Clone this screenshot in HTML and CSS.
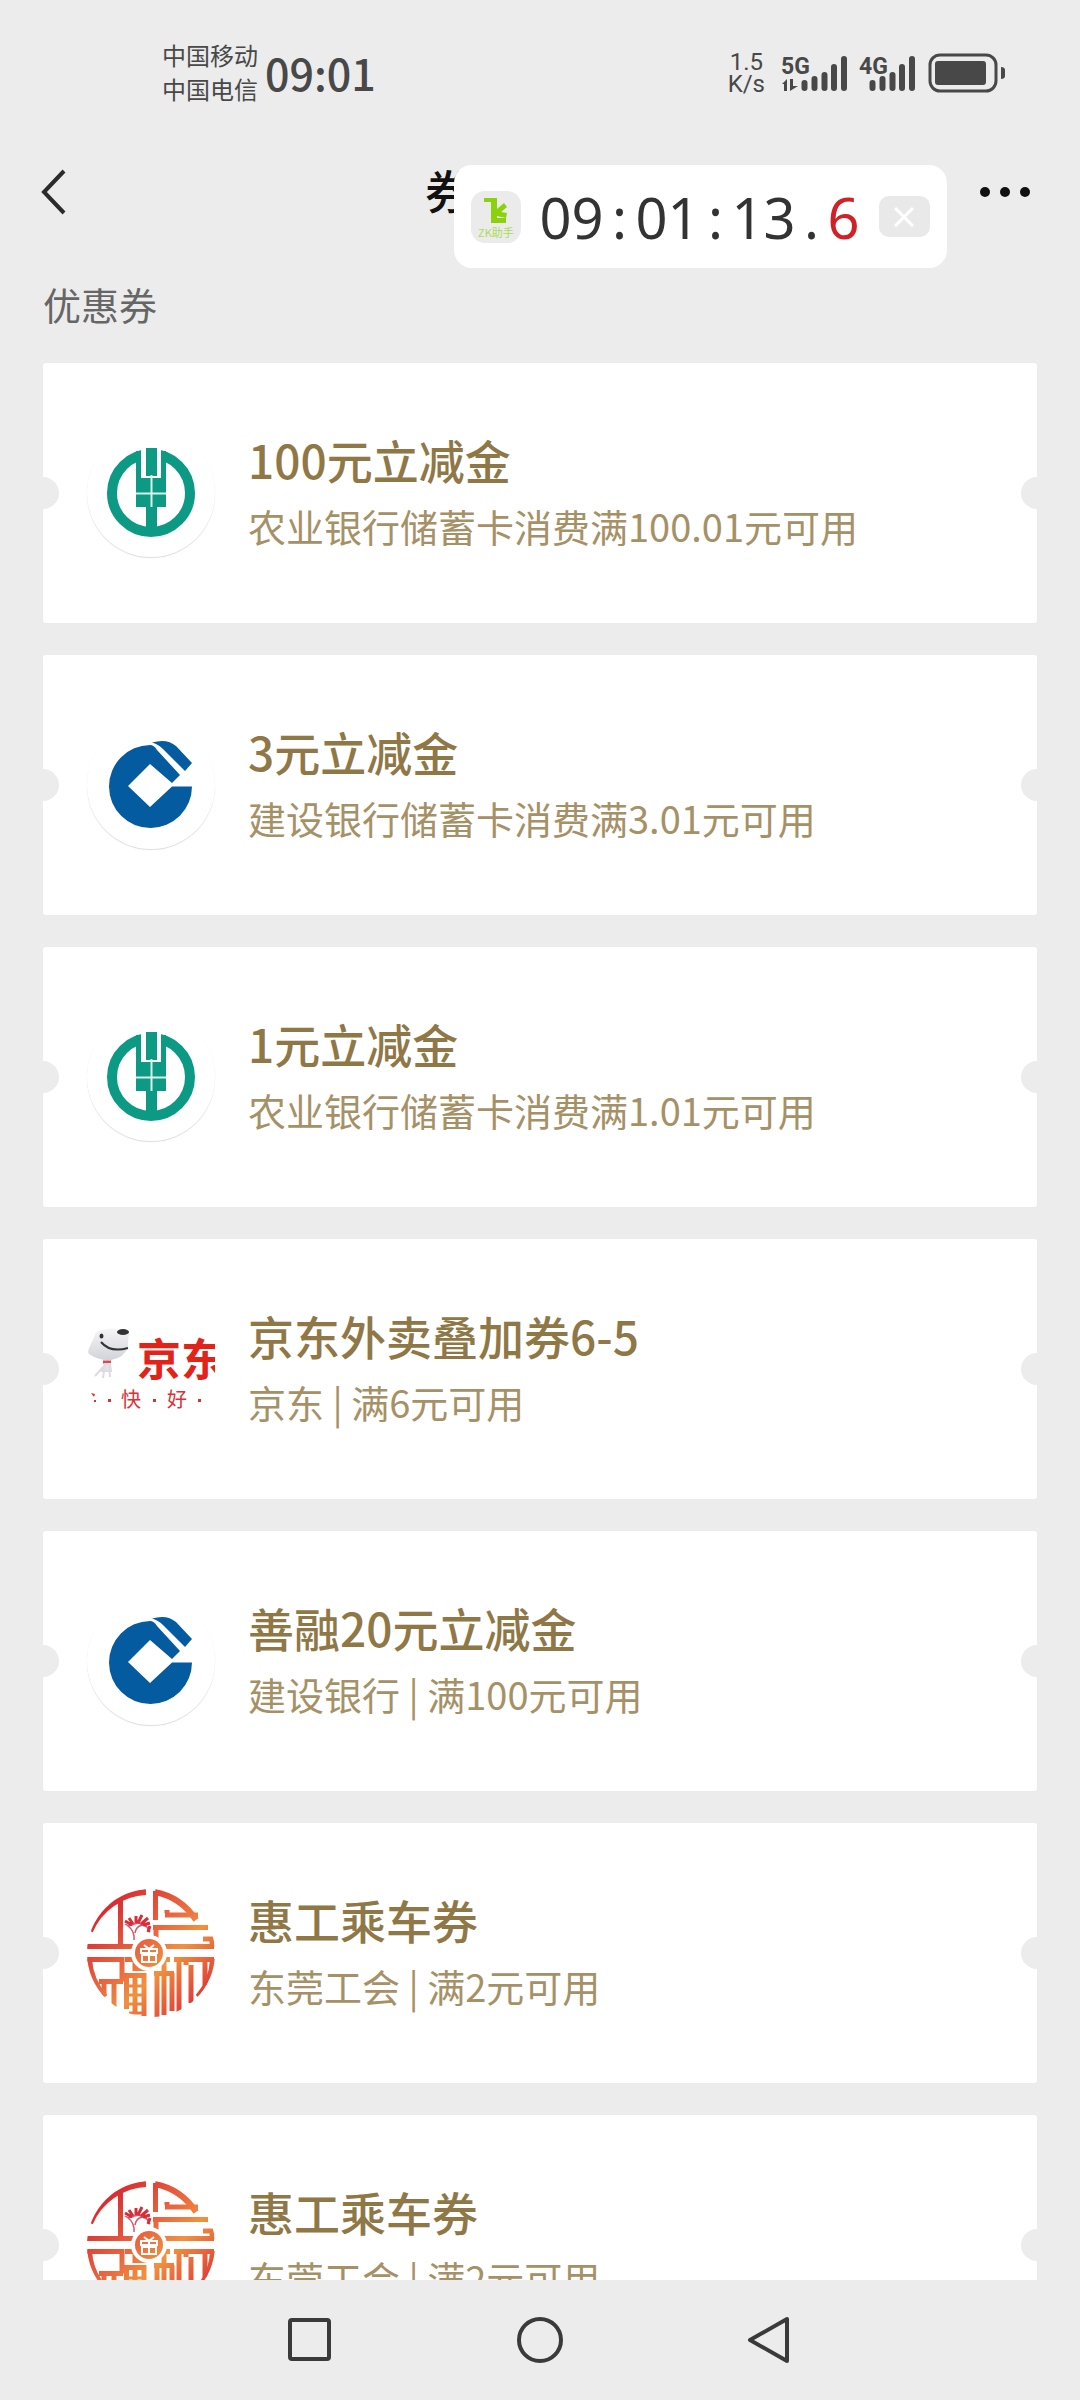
FILE: index.html
```html
<!DOCTYPE html>
<html lang="zh-CN">
  <head>
    <meta charset="UTF-8" />
    <meta name="viewport" content="width=device-width, initial-scale=1.0" />
    <title>优惠券</title>
    <link rel="stylesheet" href="styles.css">
  </head>
  <body>
    <!-- logos used by the coupons -->
    <svg class="sprite" aria-hidden="true">
      <defs>
        <linearGradient id="warm" x1="0" y1="0" x2="128" y2="128" gradientUnits="userSpaceOnUse">
          <stop offset="0.1" stop-color="#d8202f" />
          <stop offset="0.45" stop-color="#ea6a40" />
          <stop offset="0.6" stop-color="#f0923f" />
          <stop offset="0.9" stop-color="#dc3038" />
        </linearGradient>
        <linearGradient id="dog" x1="0" y1="0" x2="0" y2="1">
          <stop offset="0" stop-color="#f6f6f8" />
          <stop offset="1" stop-color="#d2d3d9" />
        </linearGradient>
        <clipPath id="round"><circle cx="64" cy="64" r="64" /></clipPath>
      </defs>
      <symbol id="abc" viewBox="0 0 128 128">
        <circle cx="64" cy="64" r="39" fill="none" stroke="#0d9a85" stroke-width="10" />
        <path fill="#fff" d="M54 17h20v32H54z" />
        <path fill="#0d9a85" d="M59 19h11v28H59zM49 22h5v27h20V22h5v56h-9v28H59V78H49z" />
        <path stroke="#d9f0ec" stroke-width="2" d="M49 64.500h30M64.500 46v32" />
      </symbol>
      <symbol id="ccb" viewBox="0 0 128 128">
        <path fill="#045b9f" d="M63 24Q67 24 70 29L93 54l-8 8L63 43 41 65l22 21 22-20.500h20A41.500 41.500 0 1 1 63 24z" />
        <path fill="#045b9f" d="M65 21.500Q80 17 89 25l16 17-7 8-22-22q-5-5-11-6.500z" />
      </symbol>
      <symbol id="jd" viewBox="0 0 128 128">
        <path fill="url(#dog)" d="M9 27Q20 22 34 24q8 0 8 5-1 4-1 13-4 11-17 13-12 1-22-6-2-2 1-8 4-8 6-14z" />
        <ellipse cx="36" cy="27" rx="6" ry="3" fill="#333" />
        <ellipse cx="14.500" cy="31" rx="2" ry="2.500" fill="#333" />
        <path d="M14 37q9 11 27 6" fill="none" stroke="#333" stroke-width="2" />
        <path d="M16 57h8" stroke="#e2474c" stroke-width="3" />
        <path d="M18 59l-2 14M22 59l1 13M16 62l-8 9M18 59h5l1 7h-9z" fill="#e3e4e9" stroke="#dcdde2" stroke-width="2" />
        <text class="jd-name" x="50" y="71">京东</text>
        <text class="jd-motto" x="34" y="102">快</text>
        <text class="jd-motto" x="80" y="102">好</text>
        <path fill="#d93136" d="M4 88l4 1-1 3zM7 95h2v2H7zM21 94h3v3h-3zM66 94h3v3h-3zM111 94h3v3h-3z" />
      </symbol>
      <symbol id="gonghui" viewBox="0 0 128 128">
        <g clip-path="url(#round)" fill="none" stroke="url(#warm)">
          <path stroke-width="6" d="M3 42A64 64 0 0 1 59 3M68 3A64 64 0 0 1 109 31M2 70A62 62 0 0 0 18 108M126 70A62 62 0 0 1 111 108" />
          <path stroke-width="5" d="M33.500 9v48M0 57.500h48M77 57.500h50M68.500 2v29M66 38.500h55M78 26h33M69 38v12M116 50h9v8M80 24v-3" />
          <path stroke-width="5" d="M0 70.500h35v22M38 70.500h10v9h14M12 92.500h24M17 92v15M27 92v27M83 70.500h-9M77 70v56M87 70.500h40M92 70v54M104 76v38" />
          <path stroke-width="5" d="M39.500 84v36M57 84v43M48 88v37M37 86.500h22M67 84.500h20M70 82v46M85 84v38M99 70v6M118 72v24" />
          <path stroke-width="3" d="M38 97h20M38 106h20M38 115h20M42 124h16" />
        </g>
        <path d="M47 51q1-9-7-15m8 8q2-10 12-7M38 35q4 3 9 0l5-1 8 4 3 5" fill="none" stroke="#e0506a" stroke-width="1.500" />
        <path d="M38 32l7 4M42 29l4 6M49 27l0 7M55 26l-4 8M61 29l-7 6M63 34l-7 2M63 37l-2 6" stroke="#d42f3b" stroke-width="3" />
        <circle cx="62" cy="64" r="18" fill="#fff" />
        <circle cx="62" cy="64" r="14" fill="url(#warm)" />
        <path d="M54 60h16v4H54zM55 66h14v7H55zM62 59v15M57 56l5 4 5-4" fill="none" stroke="#fff" stroke-width="2" />
      </symbol>
    </svg>

    <div class="status">
      <div class="carriers">
        <span>中国移动</span>
        <span>中国电信</span>
      </div>
      <div class="clock">09:01</div>
      <div class="speed">
        <span>1.5</span>
        <span>K/s</span>
      </div>
      <svg class="signal" width="66" height="40" viewBox="0 0 66 40">
        <text x="0" y="21">5G</text>
        <path d="M23.500 30v5M33.500 26v9M43.500 22v13M53 14v21M63 6v29" />
        <path class="arrows" d="M1 31l5-5v12h-3v-7zM9 26h3v7h5l-8 5z" />
      </svg>
      <svg class="signal" width="66" height="40" viewBox="0 0 66 40">
        <text x="10" y="21">4G</text>
        <path d="M23.500 30v5M33.500 26v9M43.500 22v13M53 14v21M63 6v29" />
      </svg>
      <svg class="battery" width="78" height="40" viewBox="0 0 78 40">
        <rect x="2" y="2" width="66" height="36" rx="10" />
        <path d="M10 8h45q3 0 3 3v18q0 3-3 3H10q-3 0-3-3V11q0-3 3-3zM73 14q4 0 4 3v6q0 3-4 3z" />
      </svg>
    </div>

    <header class="navbar">
      <button type="button" class="icon-btn" aria-label="返回">
        <svg width="28" height="48" viewBox="0 0 28 48"><path d="M24 3L4 24l20 21" fill="none" stroke="#2b2b2b" stroke-width="4" /></svg>
      </button>
      <h1>券</h1>
      <button type="button" class="icon-btn" aria-label="更多">
        <svg width="50" height="12" viewBox="0 0 50 12" fill="#111"><circle cx="5" cy="6" r="5" /><circle cx="25" cy="6" r="5" /><circle cx="45" cy="6" r="5" /></svg>
      </button>
    </header>

    <!-- floating clock -->
    <div class="timer">
      <svg width="50" height="52" viewBox="0 0 50 52">
        <rect width="50" height="52" rx="14" fill="#ebebeb" />
        <path fill="#8bd10c" d="M13 7h13v11l7-6 3 4-6 5 6 1-1 5-9-2v2h9v5H20V11h-7z" />
        <text x="7" y="46">ZK助手</text>
      </svg>
      <div class="digits">
        <span>0</span><span>9</span><span>:</span><span>0</span><span>1</span><span>:</span><span>1</span><span>3</span><span>.</span><span class="tenth">6</span>
      </div>
      <button type="button" class="close" aria-label="关闭">
        <svg width="20" height="20" viewBox="0 0 20 20"><path d="M1 1l18 18M19 1L1 19" stroke="#fff" stroke-width="3" /></svg>
      </button>
    </div>

    <main>
      <h2>优惠券</h2>
      <ul class="coupons">
        <li class="coupon">
          <svg class="logo shadow"><use href="#abc" /></svg>
          <div class="info">
            <h3>100元立减金</h3>
            <p>农业银行储蓄卡消费满100.01元可用</p>
          </div>
        </li>
        <li class="coupon">
          <svg class="logo shadow"><use href="#ccb" /></svg>
          <div class="info">
            <h3>3元立减金</h3>
            <p>建设银行储蓄卡消费满3.01元可用</p>
          </div>
        </li>
        <li class="coupon">
          <svg class="logo shadow"><use href="#abc" /></svg>
          <div class="info">
            <h3>1元立减金</h3>
            <p>农业银行储蓄卡消费满1.01元可用</p>
          </div>
        </li>
        <li class="coupon">
          <svg class="logo"><use href="#jd" /></svg>
          <div class="info">
            <h3>京东外卖叠加券6-5</h3>
            <p>京东 | 满6元可用</p>
          </div>
        </li>
        <li class="coupon">
          <svg class="logo shadow"><use href="#ccb" /></svg>
          <div class="info">
            <h3>善融20元立减金</h3>
            <p>建设银行 | 满100元可用</p>
          </div>
        </li>
        <li class="coupon">
          <svg class="logo"><use href="#gonghui" /></svg>
          <div class="info">
            <h3>惠工乘车券</h3>
            <p>东莞工会 | 满2元可用</p>
          </div>
        </li>
        <li class="coupon">
          <svg class="logo"><use href="#gonghui" /></svg>
          <div class="info">
            <h3>惠工乘车券</h3>
            <p>东莞工会 | 满2元可用</p>
          </div>
        </li>
      </ul>
    </main>

    <nav class="keys">
      <button type="button" aria-label="最近任务">
        <svg width="50" height="50" viewBox="0 0 50 50"><rect x="5" y="5" width="39" height="39" rx="2" /></svg>
      </button>
      <button type="button" aria-label="主页">
        <svg width="50" height="50" viewBox="0 0 50 50"><circle cx="25" cy="25" r="21" /></svg>
      </button>
      <button type="button" aria-label="返回">
        <svg width="50" height="50" viewBox="0 0 50 50"><path d="M42 4v42L5 25z" /></svg>
      </button>
    </nav>
  </body>
</html>
```

FILE: styles.css
```css
* {
  box-sizing: border-box;
}
body {
  display: flex;
  flex-direction: column;
  position: relative;
  height: 100vh;
  margin: 0;
  overflow: hidden;
  background: #ececec;
  font-family: "Noto Sans CJK SC", sans-serif;
}
h1,
h2,
h3,
p,
ul {
  margin: 0;
  padding: 0;
}
button {
  display: flex;
  align-items: center;
  justify-content: center;
  padding: 0;
  border: none;
  background: none;
}
.sprite {
  position: absolute;
  width: 0;
  height: 0;
}

/* status bar */
.status {
  display: flex;
  flex: none;
  align-items: center;
  height: 136px;
  padding: 10px 74px 0 162px;
  color: #484848;
}
.carriers {
  display: flex;
  flex-direction: column;
  padding-bottom: 2px;
  font-size: 24px;
  line-height: 34px;
}
.clock {
  margin-left: 7px;
  padding-bottom: 2px;
  font-size: 43px;
  font-weight: 500;
  line-height: 60px;
}
.speed {
  display: flex;
  flex-direction: column;
  align-items: center;
  margin-left: auto;
  font-family: Roboto, sans-serif;
  font-size: 24px;
  line-height: 22px;
}
.signal {
  margin-left: 16px;
  fill: none;
  stroke: #484848;
  stroke-width: 6px;
  stroke-linecap: round;
}
.signal + .signal {
  margin-left: 2px;
}
.signal text,
.signal .arrows {
  fill: #484848;
  stroke: none;
}
.signal text {
  font-family: Roboto, sans-serif;
  font-size: 23px;
  font-weight: 700;
}
.battery {
  margin-left: 13px;
  fill: #484848;
}
.battery rect {
  fill: none;
  stroke: #484848;
  stroke-width: 3px;
}

/* title bar */
.navbar {
  display: flex;
  flex: none;
  align-items: center;
  justify-content: space-between;
  height: 112px;
  padding: 0 50px 0 40px;
}
.icon-btn {
  width: 50px;
  height: 80px;
}
.icon-btn:first-child {
  justify-content: flex-start;
}
.navbar h1 {
  width: 220px;
  padding-bottom: 6px;
  color: #111;
  font-size: 46px;
  font-weight: 500;
  line-height: 60px;
}

/* floating clock */
.timer {
  display: flex;
  position: absolute;
  top: 165px;
  left: 42%;
  align-items: center;
  justify-content: space-between;
  width: 493px;
  height: 103px;
  padding: 0 17px;
  border-radius: 18px;
  background: #fff;
}
.timer text {
  fill: #a9dc55;
  font-size: 11px;
}
.digits {
  display: flex;
  color: #333;
  font-family: "Noto Sans", sans-serif;
  font-size: 56px;
  line-height: 76px;
}
.digits span {
  width: 32px;
  text-align: center;
}
.digits .tenth {
  color: #d02028;
}
.close {
  width: 51px;
  height: 41px;
  border-radius: 10px;
  background: #e9e9e9;
}

/* coupons */
main {
  flex: 1;
  min-height: 0;
  padding: 0 43px;
  overflow: hidden;
}
h2 {
  padding-bottom: 4px;
  color: #666;
  font-size: 38px;
  font-weight: 400;
  line-height: 111px;
}
.coupons {
  display: flex;
  flex-direction: column;
  gap: 32px;
  list-style: none;
}
.coupon {
  display: flex;
  position: relative;
  align-items: center;
  gap: 33px;
  height: 260px;
  padding: 0 44px;
  border-radius: 3px;
  background: #fff;
}
.coupon::before,
.coupon::after {
  content: "";
  position: absolute;
  top: 114px;
  width: 32px;
  height: 32px;
  border-radius: 50%;
  background: #ececec;
}
.coupon::before {
  left: -16px;
}
.coupon::after {
  right: -16px;
}
.logo {
  flex: none;
  width: 128px;
  height: 128px;
}
.shadow {
  border-radius: 50%;
  box-shadow: 0 1px 1px #ddd;
}
.info {
  padding-bottom: 2px;
}
.info h3 {
  color: #8f7846;
  font-size: 46px;
  font-weight: 500;
  line-height: 68px;
}
.info p {
  color: #a69167;
  font-size: 38px;
  line-height: 66px;
}
.jd-name {
  fill: #e2231a;
  font-size: 44px;
  font-weight: 700;
}
.jd-motto {
  fill: #d93136;
  font-size: 20px;
}

/* system keys */
.keys {
  display: grid;
  flex: none;
  grid-template-columns: repeat(3, 1fr);
  width: 64%;
  height: 120px;
  margin: 0 auto;
}
.keys svg {
  fill: none;
  stroke: #3a3a3a;
  stroke-width: 4px;
  stroke-linejoin: round;
}
```
